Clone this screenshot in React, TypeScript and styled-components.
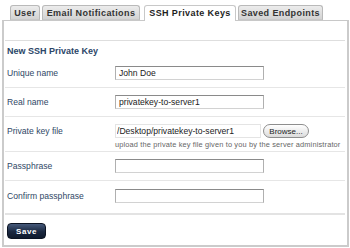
import React from "react";
import { styled, createGlobalStyle } from "styled-components";

const GlobalStyle = createGlobalStyle`
  html, body {
    margin: 0;
    padding: 0;
    background: #ffffff;
  }
  body {
    font-family: "Liberation Sans", Arial, sans-serif;
  }
`;

const tabs = ["User", "Email Notifications", "SSH Private Keys", "Saved Endpoints"];
const tabWidths = [30, 98, 92, 85];

export default function App() {
  return (
    <>
      <GlobalStyle />
      <StFrame>
        <StTabBar>
          {tabs.map((t, i) => (
            <StTab key={t} $active={i === 2} $w={tabWidths[i]}>
              {t}
            </StTab>
          ))}
        </StTabBar>
        <StPanel>
          <StHeader>New SSH Private Key</StHeader>
          <StRow>
            <StLabel>Unique name</StLabel>
            <StInput defaultValue="John Doe" />
          </StRow>
          <StRow>
            <StLabel>Real name</StLabel>
            <StInput defaultValue="privatekey-to-server1" />
          </StRow>
          <StRow $tall>
            <StLabel>Private key file</StLabel>
            <StField>
              <StFileLine>
                <StFileInput defaultValue="/Desktop/privatekey-to-server1" />
                <StBrowse type="button">Browse...</StBrowse>
              </StFileLine>
              <StHelp>
                upload the private key file given to you by the server administrator
              </StHelp>
            </StField>
          </StRow>
          <StRow>
            <StLabel>Passphrase</StLabel>
            <StInput type="password" />
          </StRow>
          <StRow $last>
            <StLabel>Confirm passphrase</StLabel>
            <StInput type="password" />
          </StRow>
          <StFooter>
            <StSave type="button">Save</StSave>
          </StFooter>
        </StPanel>
      </StFrame>
    </>
  );
}

const StFrame = styled.div`
  width: 350px;
  height: 248px;
  display: flex;
  flex-direction: column;
  overflow: hidden;
`;

const StTabBar = styled.div`
  display: flex;
  align-items: flex-end;
  height: 20px;
  padding-left: 10px;
  column-gap: 2px;
  position: relative;
  z-index: 1;
`;

const StTab = styled.div<{ $active?: boolean; $w: number }>`
  box-sizing: border-box;
  width: ${(p) => p.$w}px;
  height: ${(p) => (p.$active ? 16 : 15)}px;
  margin-left: ${(p) => (p.$active ? 2 : 0)}px;
  margin-bottom: ${(p) => (p.$active ? -1 : 0)}px;
  display: flex;
  align-items: center;
  justify-content: center;
  padding-bottom: ${(p) => (p.$active ? 1 : 0)}px;
  border: 1px solid ${(p) => (p.$active ? "#c8c8c8" : "#b9b9b9")};
  border-bottom: ${(p) => (p.$active ? "none" : "1px solid #c8c8c8")};
  border-radius: 3px 3px 0 0;
  background: ${(p) =>
    p.$active ? "#ffffff" : "linear-gradient(#ececec, #d3d3d3)"};
  color: ${(p) => (p.$active ? "#1e1e1e" : "#333333")};
  font-size: 9px;
  font-weight: 700;
  letter-spacing: 0.4px;
  white-space: nowrap;
`;

const StPanel = styled.div`
  flex: 1;
  margin: 0 1px 1px 2px;
  border: 2px solid #cbcbcb;
  border-top: 1px solid #c8c8c8;
  padding: 19px 2px 0 1px;
  display: flex;
  flex-direction: column;
`;

const StHeader = styled.div`
  border-top: 1px solid #dedede;
  height: 18px;
  line-height: 20px;
  padding-left: 2px;
  font-size: 9px;
  font-weight: 700;
  color: #2b4668;
`;

const StRow = styled.div<{ $tall?: boolean; $last?: boolean }>`
  box-sizing: border-box;
  display: flex;
  align-items: ${(p) => (p.$tall ? "flex-start" : "center")};
  height: ${(p) => (p.$tall ? 35 : 29)}px;
  padding-top: ${(p) => (p.$tall ? 7 : 0)}px;
  border-bottom: ${(p) => (p.$last ? "none" : "1px solid #e6e6e6")};
  flex-shrink: 0;
`;

const StLabel = styled.div`
  width: 110px;
  padding-left: 2px;
  box-sizing: border-box;
  font-size: 8.6px;
  color: #2f4866;
  line-height: 14px;
`;

const StInput = styled.input`
  box-sizing: border-box;
  width: 149px;
  height: 14px;
  margin: 0;
  padding: 0 3px;
  border: 1px solid #b0b0b0;
  border-top-color: #8a8a8a;
  border-bottom-color: #d2d2d2;
  background: #ffffff;
  font-family: "Liberation Sans", Arial, sans-serif;
  font-size: 8.6px;
  color: #222222;
  outline: none;
`;

const StField = styled.div`
  display: flex;
  flex-direction: column;
`;

const StFileLine = styled.div`
  display: flex;
  align-items: center;
  column-gap: 2px;
`;

const StFileInput = styled(StInput)`
  width: 146px;
  border-color: #e4e4e4;
  padding-left: 1px;
`;

const StBrowse = styled.button`
  box-sizing: border-box;
  width: 46px;
  height: 14px;
  margin: 0;
  padding: 0;
  border: 1px solid #8e8e8e;
  border-radius: 7px;
  background: linear-gradient(#ffffff, #dcdcdc);
  font-family: "Liberation Sans", Arial, sans-serif;
  font-size: 8px;
  color: #222222;
`;

const StHelp = styled.div`
  margin-top: 2px;
  font-size: 7.4px;
  line-height: 10px;
  letter-spacing: 0.15px;
  color: #666666;
  white-space: nowrap;
`;

const StFooter = styled.div`
  display: flex;
  margin-top: 3px;
  border-top: 2px solid #e3e3e3;
  padding: 8px 0 0 2px;
`;

const StSave = styled.button`
  box-sizing: border-box;
  width: 39px;
  height: 16px;
  margin: 0;
  padding: 0;
  border: 1px solid #0b1322;
  border-radius: 4px;
  background: linear-gradient(#45597a, #1a2840 55%, #0f1a2c);
  color: #ffffff;
  font-family: "Liberation Sans", Arial, sans-serif;
  font-size: 8px;
  font-weight: 700;
  letter-spacing: 0.6px;
`;
